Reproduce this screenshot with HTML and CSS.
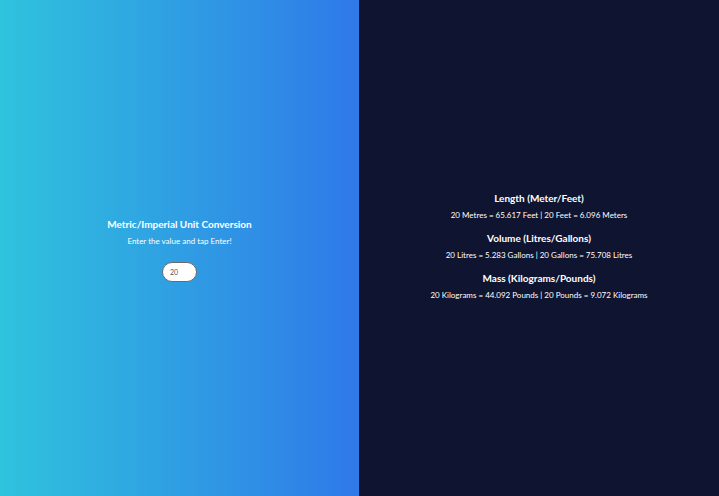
FILE: index.html
```html
<!DOCTYPE html>
<html>
<head>
<meta charset="utf-8">
<link rel="stylesheet" href="styles.css">
</head>
<body>
<main class="app">
  <section class="panel panel-input">
    <h1 class="title">Metric/Imperial Unit Conversion</h1>
    <p class="hint">Enter the value and tap Enter!</p>
    <input class="value" type="text" value="20">
  </section>
  <section class="panel panel-results">
    <div class="result">
      <h2 class="result-title">Length (Meter/Feet)</h2>
      <p class="result-text">20 Metres = 65.617 Feet | 20 Feet = 6.096 Meters</p>
    </div>
    <div class="result">
      <h2 class="result-title">Volume (Litres/Gallons)</h2>
      <p class="result-text">20 Litres = 5.283 Gallons | 20 Gallons = 75.708 Litres</p>
    </div>
    <div class="result">
      <h2 class="result-title">Mass (Kilograms/Pounds)</h2>
      <p class="result-text">20 Kilograms = 44.092 Pounds | 20 Pounds = 9.072 Kilograms</p>
    </div>
  </section>
</main>
</body>
</html>
```
FILE: styles.css
```css
html, body {
  margin: 0;
  padding: 0;
  height: 100%;
}
body {
  font-family: Lato, "Open Sans", sans-serif;
  color: #ffffff;
}
.app {
  display: grid;
  grid-template-columns: 359px 1fr;
  height: 100%;
}
.panel {
  display: flex;
  flex-direction: column;
  align-items: center;
  justify-content: center;
  text-align: center;
}
.panel-input {
  background: linear-gradient(to right, #2fc3dd, #2f79e9);
  padding-top: 4px;
}
.panel-results {
  background: #0f1430;
  padding-bottom: 4px;
}
.title {
  margin: 0;
  font-size: 10px;
  font-weight: 700;
  line-height: 12px;
}
.hint {
  margin: 6px 0 0;
  font-size: 8px;
  line-height: 10px;
}
.value {
  margin-top: 16px;
  width: 35px;
  height: 20px;
  box-sizing: border-box;
  border: 1px solid #6b6b6b;
  border-radius: 10px;
  background: #ffffff;
  padding: 0 0 0 7px;
  font-family: Lato, sans-serif;
  font-size: 7px;
  color: #555;
  outline: none;
}
.result + .result {
  margin-top: 12px;
}
.result-title {
  margin: 0;
  font-size: 10px;
  font-weight: 700;
  line-height: 12px;
}
.result-text {
  margin: 6px 0 0;
  font-size: 8px;
  line-height: 10px;
}
```
